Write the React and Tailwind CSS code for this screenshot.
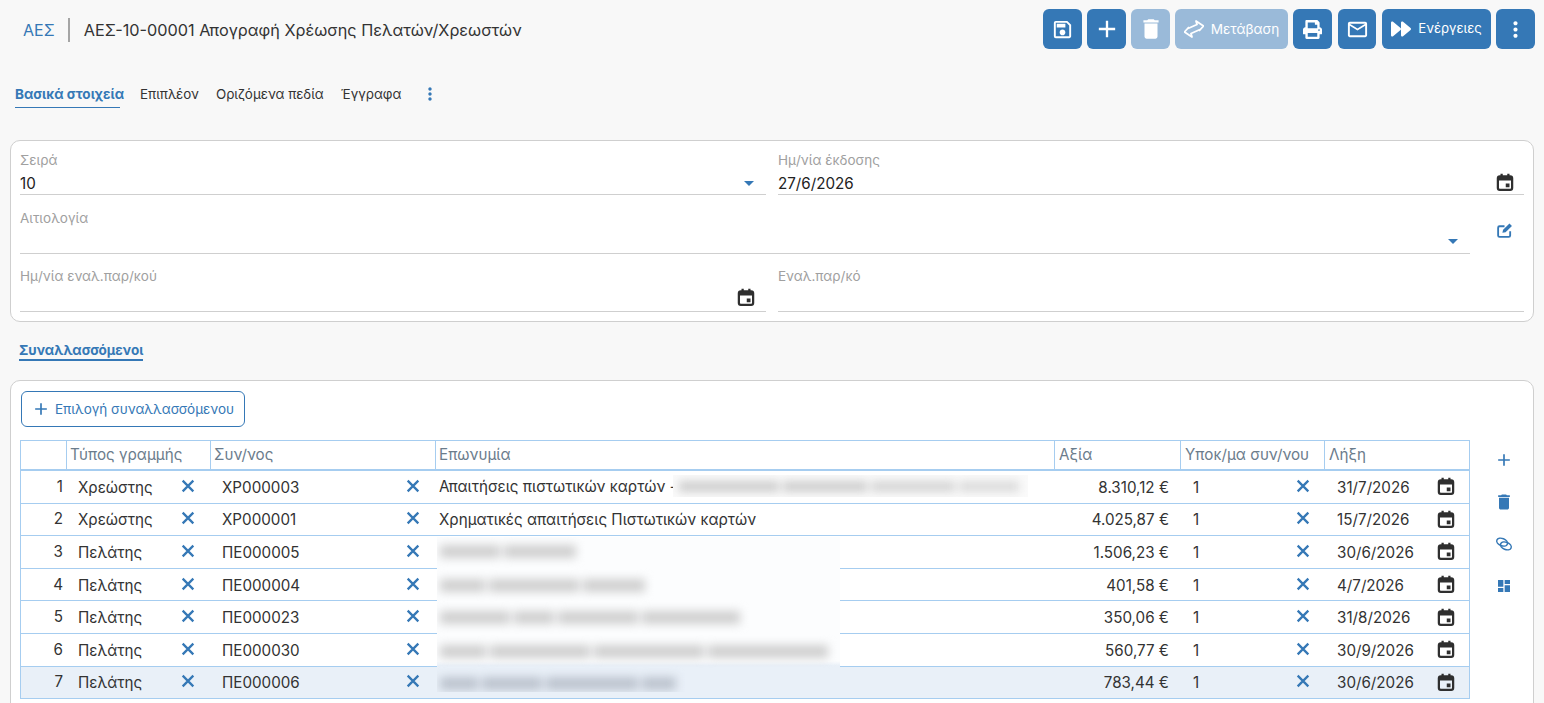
import { MdOutlineSave, MdAdd, MdDelete, MdOutlineEmail, MdMoreVert, MdArrowDropDown, MdDashboard } from 'react-icons/md'
import { FaForward, FaPrint } from 'react-icons/fa'

const rows = [
    { n: 1, type: 'Χρεώστης', code: 'ΧΡ000003', name: 'Απαιτήσεις πιστωτικών καρτών -', value: '8.310,12 €', date: '31/7/2026' },
    { n: 2, type: 'Χρεώστης', code: 'ΧΡ000001', name: 'Χρηματικές απαιτήσεις Πιστωτικών καρτών', value: '4.025,87 €', date: '15/7/2026' },
    { n: 3, type: 'Πελάτης', code: 'ΠΕ000005', name: '', value: '1.506,23 €', date: '30/6/2026' },
    { n: 4, type: 'Πελάτης', code: 'ΠΕ000004', name: '', value: '401,58 €', date: '4/7/2026' },
    { n: 5, type: 'Πελάτης', code: 'ΠΕ000023', name: '', value: '350,06 €', date: '31/8/2026' },
    { n: 6, type: 'Πελάτης', code: 'ΠΕ000030', name: '', value: '560,77 €', date: '30/9/2026' },
    { n: 7, type: 'Πελάτης', code: 'ΠΕ000006', name: '', value: '783,44 €', date: '30/6/2026', selected: true },
]

// θολωμένα ονόματα, γραμμές 3 έως 7
const blurred = [
    { top: 'mt-[8px]', words: ['w-[60px]', 'w-[72px]'] },
    { top: 'mt-[21px]', words: ['w-[45px]', 'w-[90px]', 'w-[62px]'] },
    { top: 'mt-[19px]', words: ['w-[70px]', 'w-[40px]', 'w-[80px]', 'w-[98px]'] },
    { top: 'mt-[21px]', words: ['w-[46px]', 'w-[100px]', 'w-[110px]', 'w-[120px]'] },
    { top: 'mt-[19px]', dark: true, words: ['w-[38px]', 'w-[60px]', 'w-[92px]', 'w-[34px]'] },
]

function ToolButton({ children, className = '', disabled }) {
    return (
        <button className={`h-10 rounded-md flex items-center justify-center text-white ${disabled ? 'bg-[#9abad9]' : 'bg-[#3578b6]'} ${className}`}>
            {children}
        </button>
    )
}

function Field({ label, value, icon, className = '', labelTop = 'pt-[11px]' }) {
    return (
        <div className={`relative border-b border-[#cfcfcf] ${className}`}>
            <div className={`${labelTop} text-[13.5px] leading-4 text-[#a0a0a0]`}>{label}</div>
            <div className="mt-[6px] text-[15.2px] leading-5 text-[#222]">{value}</div>
            {icon}
        </div>
    )
}

const CalendarIcon = ({ className = '' }) => (
    <svg viewBox="0 0 24 24" width="18" height="18" className={className}>
        <path d="M6 1h3v3H6zM15 1h3v3h-3z" fill="#2f2f2f" />
        <rect x="2.5" y="4.5" width="19" height="18" rx="2.5" fill="none" stroke="#2f2f2f" strokeWidth="3" />
        <rect x="3" y="5" width="18" height="5" fill="#2f2f2f" />
        <rect x="13" y="14" width="5" height="5" fill="#2f2f2f" />
    </svg>
)

const CloseIcon = () => (
    <svg viewBox="0 0 24 24" width="16" height="16" className="-mt-[5px]">
        <path d="M4 4l16 16M20 4L4 20" stroke="#3578b6" strokeWidth="3.4" fill="none" />
    </svg>
)

const TransferIcon = () => (
    <svg viewBox="0 0 20 18" width="20" height="18">
        <path d="M4 8.500L13 4.500L12 1L19.500 6L15 11" fill="none" stroke="currentColor" strokeWidth="1.8" strokeLinejoin="round" />
        <path d="M16 9.500L7 13.500L8 17L0.500 12L5 7" fill="none" stroke="currentColor" strokeWidth="1.8" strokeLinejoin="round" />
    </svg>
)

const EditIcon = () => (
    <svg viewBox="0 0 24 24" width="17" height="17" className="ml-[26px] mt-[27px] text-[#3578b6]">
        <path d="M12 6H5a2 2 0 0 0-2 2v11a2 2 0 0 0 2 2h13a2 2 0 0 0 2-2v-6" fill="none" stroke="currentColor" strokeWidth="2.6" />
        <path d="M9 15l1-4 9-9 3.5 3.5-9 9z" fill="currentColor" />
    </svg>
)

const LinkIcon = () => (
    <svg viewBox="0 0 24 24" width="18" height="18" className="my-[1px]">
        <ellipse cx="9.5" cy="9.5" rx="7.5" ry="4.8" transform="rotate(22 9.5 9.5)" fill="none" stroke="currentColor" strokeWidth="2" />
        <ellipse cx="14.5" cy="14.5" rx="7.5" ry="4.8" transform="rotate(22 14.5 14.5)" fill="none" stroke="currentColor" strokeWidth="2" />
    </svg>
)

export default function App() {
    return (
        <div className="h-screen overflow-hidden bg-[#f8f8f8] font-['Inter',sans-serif] text-[#333]">
            {/* Τίτλος */}
            <div className="flex items-center h-[49px] pt-[9px] pl-[23px] pr-[9px]">
                <span className="mt-[2px] text-[16px] text-[#3578b6]">ΑΕΣ</span>
                <span className="ml-[13px] mt-[2px] w-[2px] h-6 bg-[#a5a5a5]" />
                <span className="ml-[14px] mt-[2px] text-[16.25px] text-[#333]">ΑΕΣ-10-00001 Απογραφή Χρέωσης Πελατών/Χρεωστών</span>
                <div className="ml-auto flex gap-[5px]">
                    <ToolButton className="w-[39px]"><MdOutlineSave size={23} /></ToolButton>
                    <ToolButton className="w-[39px]"><MdAdd size={28} /></ToolButton>
                    <ToolButton className="w-[39px]" disabled><MdDelete size={26} /></ToolButton>
                    <ToolButton className="w-[113px] gap-[7px] text-[13.6px]" disabled><TransferIcon />Μετάβαση</ToolButton>
                    <ToolButton className="w-[39px]"><FaPrint size={19} /></ToolButton>
                    <ToolButton className="w-[38px] ml-[1px]"><MdOutlineEmail size={23} /></ToolButton>
                    <ToolButton className="w-[109px] gap-[7px] ml-[1px] text-[13.2px]"><FaForward size={20} />Ενέργειες</ToolButton>
                    <ToolButton className="w-[39px]"><MdMoreVert size={25} /></ToolButton>
                </div>
            </div>

            {/* Tabs */}
            <div className="flex items-center h-[50px] mt-[20px] pl-[15px] text-[13.4px]">
                <span className="font-bold text-[13.5px] text-[#3578b6] relative">
                    Βασικά στοιχεία
                    <span className="absolute left-0 -bottom-[4px] w-[105px] h-px bg-[#3578b6]" />
                </span>
                <span className="ml-[16px]">Επιπλέον</span>
                <span className="ml-[17px]">Οριζόμενα πεδία</span>
                <span className="ml-[17px]">Έγγραφα</span>
                <MdMoreVert size={20} className="ml-[19px] text-[#3578b6]" />
            </div>

            {/* Βασικά πεδία */}
            <div className="mx-[10px] mt-[21px] h-[182px] rounded-[10px] border border-[#cfcfcf] bg-white px-[9px]">
                <div className="grid grid-cols-[746px_746px] gap-x-[12px]">
                    <Field label="Σειρά" value="10" className="h-[54px]" icon={<MdArrowDropDown size={24} className="absolute right-[5px] top-[30px] text-[#3578b6]" />} />
                    <Field label="Ημ/νία έκδοσης" value="27/6/2026" className="h-[54px]" icon={<CalendarIcon className="absolute right-[10px] top-[32px]" />} />
                </div>
                <div className="flex">
                    <Field label="Αιτιολογία" value="" labelTop="pt-[15px]" className="w-[1450px] h-[59px]" icon={<MdArrowDropDown size={24} className="absolute right-[5px] top-[34px] text-[#3578b6]" />} />
                    <EditIcon />
                </div>
                <div className="grid grid-cols-[746px_746px] gap-x-[12px]">
                    <Field label="Ημ/νία εναλ.παρ/κού" value="" labelTop="pt-[14px]" className="h-[58px]" icon={<CalendarIcon className="absolute right-[11px] top-[34px]" />} />
                    <Field label="Εναλ.παρ/κό" value="" labelTop="pt-[14px]" className="h-[58px]" />
                </div>
            </div>

            {/* Section tab */}
            <div className="pl-[19px] mt-[20px] h-[38px]">
                <div className="w-fit text-[13.5px] leading-[17px] font-bold text-[#3578b6] border-b-2 border-[#3578b6]">Συναλλασσόμενοι</div>
            </div>

            {/* Πίνακας */}
            <div className="mx-[10px] h-[400px] rounded-[10px] border border-[#cfcfcf] bg-white pl-[10px] pt-[10px]">
                <button className="flex items-center h-9 w-[224px] rounded-md border border-[#3578b6] pl-[9px] text-[13.5px] text-[#3578b6]">
                    <MdAdd size={20} className="mr-[4px]" />
                    Επιλογή συναλλασσόμενου
                </button>
                <div className="flex">
                    <div className="relative mt-[13px] -ml-px w-[1450px]">
                        <div className="grid grid-cols-[46px_144px_225px_619px_126px_144px_146px] h-[31px] border border-[#a6cdf0] border-b-2 text-[15.2px] text-[#6b7c8c]">
                            <div className="border-r border-[#a6cdf0]" />
                            <div className="border-r border-[#a6cdf0] pl-[3px] leading-[27px]">Τύπος γραμμής</div>
                            <div className="border-r border-[#a6cdf0] pl-[3px] leading-[27px]">Συν/νος</div>
                            <div className="border-r border-[#a6cdf0] pl-[3px] leading-[27px]">Επωνυμία</div>
                            <div className="border-r border-[#a6cdf0] pl-[4px] leading-[27px]">Αξία</div>
                            <div className="border-r border-[#a6cdf0] pl-[4px] leading-[27px]">Υποκ/μα συν/νου</div>
                            <div className="pl-[4px] leading-[27px]">Λήξη</div>
                        </div>
                        {rows.map((r) => (
                            <div
                                key={r.n}
                                className={`grid grid-cols-[46px_144px_225px_619px_126px_144px_146px] items-center h-[32.6px] pt-[3px] border-x border-b border-[#a6cdf0] text-[15.2px] text-[#333] ${r.selected ? 'bg-[#e9f0f8]' : ''}`}
                            >
                                <div className="text-right pr-[4px] -mt-[2px]">{r.n}</div>
                                <div className="flex items-center justify-between pl-[11px] pr-[15px]">
                                    {r.type}
                                    <CloseIcon />
                                </div>
                                <div className="flex items-center justify-between pl-[11px] pr-[15px]">
                                    {r.code}
                                    <CloseIcon />
                                </div>
                                <div className="pl-[3px] -mt-[1px] truncate">{r.name}</div>
                                <div className="text-right pr-[12px]">{r.value}</div>
                                <div className="flex items-center justify-between pl-[12px] pr-[14px]">
                                    1
                                    <CloseIcon />
                                </div>
                                <div className="flex items-center justify-between pl-[12px] pr-[16px]">
                                    {r.date}
                                    <CalendarIcon className="-mt-[4px]" />
                                </div>
                            </div>
                        ))}

                        {/* θολωμένα ονόματα */}
                        <div className="absolute left-[653px] top-[35px] w-[355px] h-[22px] bg-[#fafafa] overflow-hidden">
                            <div className="mt-[6px] ml-[6px] flex gap-[4px] blur-[4px]">
                                <div className="w-[100px] h-[11px] bg-[#cfcfcf]" />
                                <div className="w-[84px] h-[11px] bg-[#cfcfcf]" />
                                <div className="w-[84px] h-[11px] bg-[#d6d6d6]" />
                                <div className="w-[60px] h-[11px] bg-[#dcdcdc]" />
                            </div>
                        </div>
                        <div className="absolute left-[417px] top-[97px] w-[403px] h-[155px] bg-[linear-gradient(#fcfdfe_80%,#e9f0f8_83%)] overflow-hidden">
                            {blurred.map((b, i) => (
                                <div key={i} className={`${b.top} ml-[3px] flex gap-[4px] blur-[5px]`}>
                                    {b.words.map((w, k) => (
                                        <div key={k} className={`${w} h-[13px] ${b.dark ? 'bg-[#bcc3ce]' : 'bg-[#cfcfcf]'}`} />
                                    ))}
                                </div>
                            ))}
                        </div>
                    </div>
                    <div className="ml-[24px] mt-[23px] flex flex-col items-center gap-[22px] text-[#3578b6]">
                        <MdAdd size={20} />
                        <MdDelete size={20} />
                        <LinkIcon />
                        <MdDashboard size={16} className="mt-[2px]" />
                    </div>
                </div>
            </div>
        </div>
    )
}
